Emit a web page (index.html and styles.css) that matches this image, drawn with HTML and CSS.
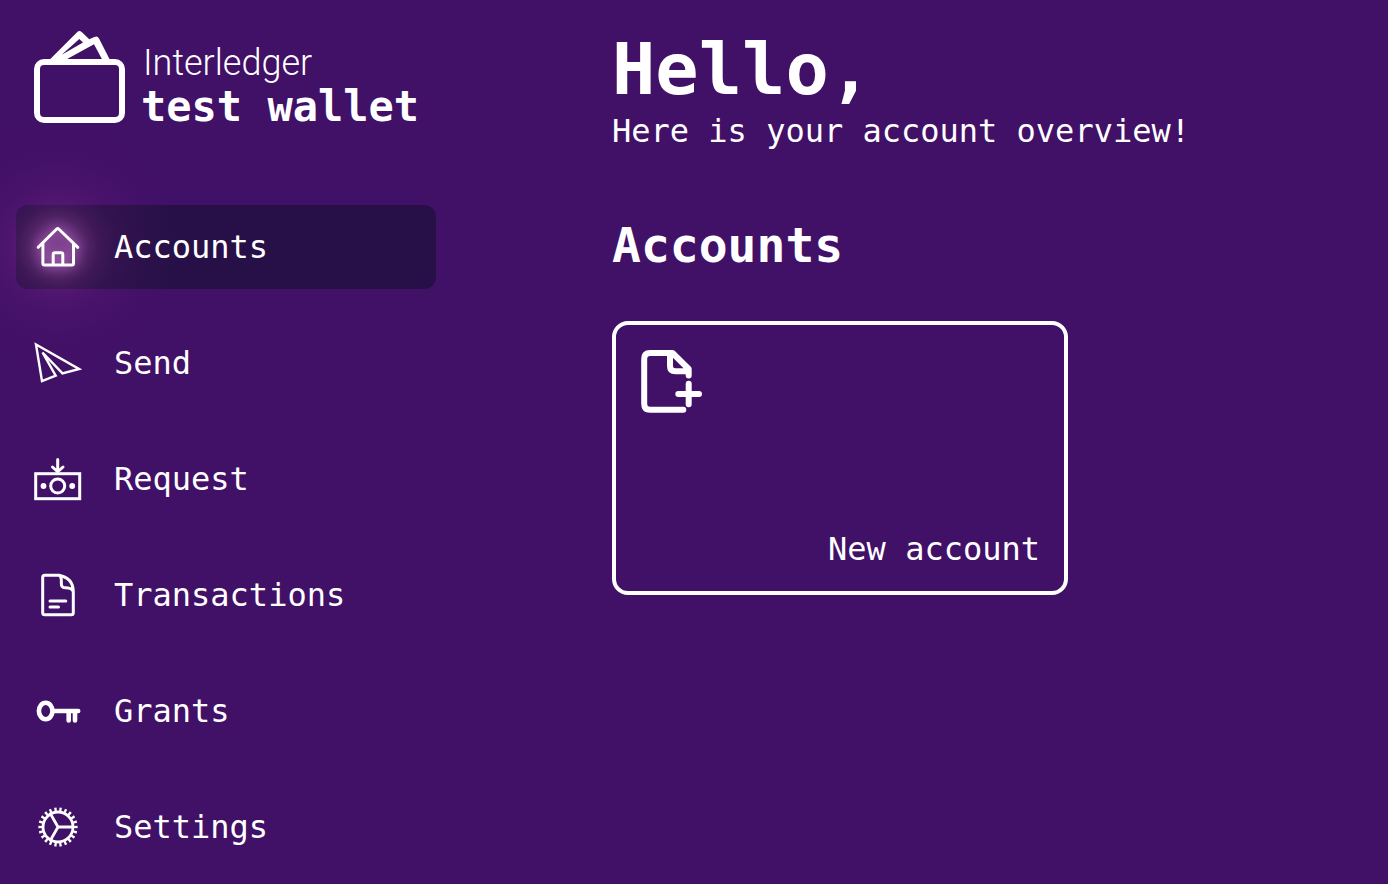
FILE: index.html
```html
<!DOCTYPE html>
<html lang="en">
<head>
<meta charset="utf-8">
<meta name="viewport" content="width=device-width, initial-scale=1">
<title>Interledger test wallet</title>
<link rel="stylesheet" href="styles.css">
</head>
<body>
<div class="layout">
  <aside class="sidebar">
    <a class="logo" href="#">
      <svg class="logo-mark" viewBox="0 0 94 96" aria-hidden="true">
        <rect x="4" y="33" width="85" height="58" rx="7"/>
        <path class="bills" d="M16.300 31 44.300 3Q46.300 1 48.700 3L56.300 10.300 61.300 8Q64.500 6.500 66 9.500L77 31ZM46.300 10 28.700 25.700 50 13.500ZM61 15.300 33.700 30.300H69Z"/>
      </svg>
      <span class="logo-text">
        <span class="logo-brand">Interledger</span>
        <span class="logo-name">test wallet</span>
      </span>
    </a>
    <nav class="nav" aria-label="Main">
      <a class="nav-item nav-item-active" href="#" aria-current="page">
        <svg class="icon" viewBox="0 0 48 48" aria-hidden="true">
          <path d="M4.200 24.300 22.700 6Q23.700 5.100 24.700 6L43.800 24.300M8.900 20V40.500Q8.900 42 10.400 42H38Q39.500 42 39.500 40.500V20M19.200 42V31.500Q19.200 29.700 21 29.700H27Q28.800 29.700 28.800 31.500V42"/>
        </svg>
        <span>Accounts</span>
      </a>
      <a class="nav-item" href="#">
        <svg class="icon icon-thin" viewBox="0 0 48 48" aria-hidden="true">
          <path d="M2 5.500 45 30 28.500 34.300 8.500 13.500 21.700 36.700 8 42.200Z"/>
        </svg>
        <span>Send</span>
      </a>
      <a class="nav-item" href="#">
        <svg class="icon" viewBox="0 0 48 48" aria-hidden="true">
          <rect x="1.700" y="18.700" width="44" height="25"/>
          <circle cx="23.700" cy="31" r="7"/>
          <path d="M23.700 4.500V16.500M18.500 12 23.700 16.800 29 12"/>
          <circle class="solid" cx="9.500" cy="31" r="2.900"/>
          <circle class="solid" cx="38.200" cy="31" r="2.900"/>
        </svg>
        <span>Request</span>
      </a>
      <a class="nav-item" href="#">
        <svg class="icon" viewBox="0 0 48 48" aria-hidden="true">
          <path d="M10.700 4.300H25Q39.300 7 39.300 21V41.700Q39.300 43.700 37.300 43.700H10.700Q8.700 43.700 8.700 41.700V6.300Q8.700 4.300 10.700 4.300ZM25 4.300C28 6 27.500 9 27.300 12Q27 17 32 16.800Q38.500 17 39.300 21M16 30H31.800M16 36H24.500"/>
        </svg>
        <span>Transactions</span>
      </a>
      <a class="nav-item" href="#">
        <svg class="icon icon-key" viewBox="0 0 48 48" aria-hidden="true">
          <ellipse cx="11.700" cy="24" rx="6.800" ry="8.200"/>
          <path d="M19 24H44.200M34.700 25V33.500M41 25V33.500"/>
        </svg>
        <span>Grants</span>
      </a>
      <a class="nav-item" href="#">
        <svg class="icon icon-gear" viewBox="0 0 48 48" aria-hidden="true">
          <circle cx="24" cy="24" r="15"/>
          <circle class="teeth" cx="24" cy="24" r="17.600" pathLength="220"/>
          <path d="M24 24H39M24 24 16.400 10.800M24 24 16.400 37.200"/>
        </svg>
        <span>Settings</span>
      </a>
    </nav>
  </aside>
  <main class="main">
    <h1 class="title">Hello,</h1>
    <p class="subtitle">Here is your account overview!</p>
    <h2 class="section-title">Accounts</h2>
    <a class="card" href="#">
      <svg class="card-icon" viewBox="0 0 64 64" aria-hidden="true">
        <path d="M43.300 60.700H10Q4.200 60.700 4.200 54.700V10Q4.200 4 10 4H32.500L48.700 20V26.500M30 4V17Q30 22.300 35.300 22.300H48.700M48.700 34.700V55.300M38.300 45H59"/>
      </svg>
      <span class="card-label">New account</span>
    </a>
  </main>
</div>
</body>
</html>
```

FILE: styles.css
```css
* {
  box-sizing: border-box;
}

body {
  margin: 0;
  background: #411067;
  color: #fff;
  font-family: "DejaVu Sans Mono", monospace;
  font-size: 32px;
  line-height: 40px;
}

a {
  color: inherit;
  text-decoration: none;
}

svg {
  display: block;
  flex-shrink: 0;
  fill: none;
  stroke: #fff;
}

.layout {
  display: flex;
  min-height: 100vh;
}

.sidebar {
  flex: 0 0 452px;
  padding: 29px 16px 15px;
}

.logo {
  display: flex;
  gap: 14px;
  padding-left: 17px;
}

.logo-mark {
  width: 94px;
  height: 96px;
  stroke-width: 6px;
  stroke-linejoin: round;
}

.bills {
  fill: #fff;
  fill-rule: evenodd;
  stroke: none;
}

.logo-text {
  display: flex;
  flex-direction: column;
  height: 96px;
  padding-top: 10px;
  white-space: nowrap;
}

.logo-brand {
  padding-left: 2px;
  font: 300 36px/48px Roboto, sans-serif;
}

.logo-name {
  font-size: 42px;
  font-weight: 700;
  line-height: 40px;
}

.nav {
  display: flex;
  flex-direction: column;
  gap: 32px;
  margin-top: 80px;
}

.nav-item {
  position: relative;
  display: flex;
  align-items: center;
  gap: 32px;
  height: 84px;
  padding: 0 18px;
  border-radius: 12px;
}

.nav-item-active {
  background: #271047;
}

.nav-item-active::before {
  content: "";
  position: absolute;
  left: -78px;
  top: -78px;
  width: 240px;
  height: 240px;
  background: radial-gradient(closest-side, rgba(200, 105, 205, 0.5) 0, rgba(200, 105, 205, 0.46) 12%, rgba(196, 95, 195, 0.38) 18%, rgba(188, 85, 182, 0.27) 25%, rgba(170, 60, 160, 0.18) 34%, rgba(150, 45, 150, 0.11) 48%, rgba(140, 40, 150, 0.05) 70%, rgba(140, 40, 150, 0) 100%);
  pointer-events: none;
}

.nav-item > span,
.nav-item > svg {
  position: relative;
}

.icon {
  width: 48px;
  height: 48px;
  stroke-width: 3px;
  stroke-linecap: round;
}

.nav-item-active .icon {
  filter: drop-shadow(0 0 6px rgba(255, 170, 255, 0.5));
}

.icon-thin {
  stroke-width: 2.400px;
}

.icon-key {
  stroke-width: 4.600px;
}

.icon-gear {
  stroke-width: 2.800px;
}

.solid {
  fill: #fff;
  stroke: none;
}

.teeth {
  stroke-width: 4px;
  stroke-linecap: butt;
  stroke-dasharray: 4.600 5.400;
  stroke-dashoffset: 2.300;
}

.main {
  flex: 1;
  min-width: 0;
  padding: 33px 16px 32px 160px;
}

.title {
  margin: 0;
  font-size: 72px;
  line-height: 72px;
}

.subtitle {
  margin: 6px 0 66px;
}

.section-title {
  margin: 0 0 48px;
  font-size: 48px;
  line-height: 56px;
}

.card {
  display: flex;
  flex-direction: column;
  justify-content: space-between;
  max-width: 456px;
  min-height: 274px;
  padding: 24px 24px 22px;
  border: 4px solid #fff;
  border-radius: 16px;
}

.card-icon {
  width: 64px;
  height: 64px;
  stroke-width: 6px;
  stroke-linecap: round;
  stroke-linejoin: round;
}

.card-label {
  align-self: flex-end;
}
```
